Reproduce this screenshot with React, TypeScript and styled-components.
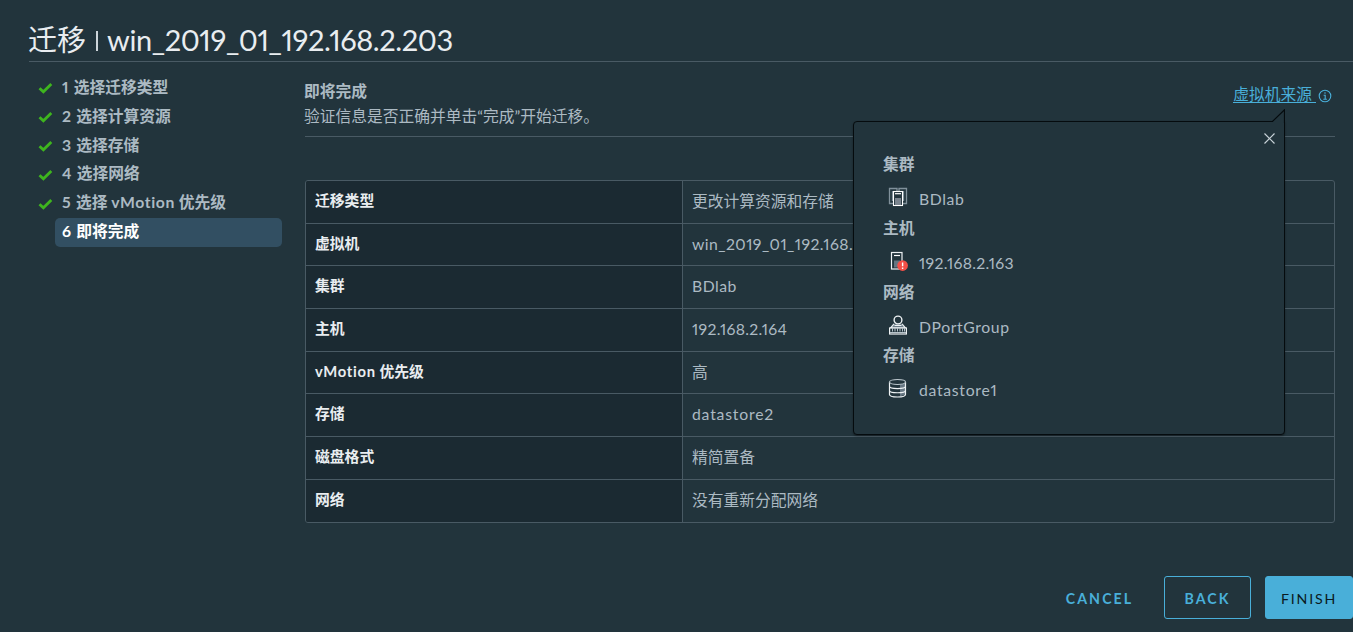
import React from "react";
import styled, { createGlobalStyle } from "styled-components";

const fontStack = `Lato, "Noto Sans CJK SC", sans-serif`;

const GlobalStyle = createGlobalStyle`
  *, *::before, *::after { box-sizing: border-box; }
  body {
    margin: 0;
    background: #22343c;
    color: #acbac3;
    font-family: ${fontStack};
    font-size: 15.75px;
    font-variant-numeric: proportional-nums;
    overflow: hidden;
  }
`;

const Wizard = styled.div`
  display: flex;
  flex-direction: column;
  width: 1353px;
  height: 632px;
  background: #22343c;
`;

const Header = styled.header`
  height: 62px;
  margin-left: 29px;
  padding-top: 21px;
  border-bottom: 1px solid #495a64;
`;

const Title = styled.h1`
  display: flex;
  align-items: baseline;
  margin: 0 0 0 -1px;
  font-size: 29px;
  line-height: 38px;
  font-weight: 400;
  color: #e9edf0;
  white-space: pre;
`;

const TitleBar = styled.i`
  align-self: center;
  width: 1.5px;
  height: 20px;
  margin: 2px 9.5px 0 10px;
  background: #cdd5da;
`;

const Latin = styled.span<{ $track?: number }>`
  letter-spacing: ${(p) => p.$track ?? 0}px;
`;

const Body = styled.div`
  display: flex;
  flex: 1;
  min-height: 0;
`;

const Steps = styled.ol`
  display: flex;
  flex-direction: column;
  width: 305px;
  margin: 0;
  padding: 12px 23px 0 38px;
  list-style: none;
`;

const Step = styled.li`
  display: flex;
  align-items: center;
  height: 28.8px;
`;

const CheckSlot = styled.span`
  display: flex;
  width: 17px;
`;

const StepLabel = styled.span<{ $active?: boolean }>`
  flex: 1;
  height: 28.8px;
  padding-left: 7px;
  border-radius: 5px;
  line-height: 26px;
  font-weight: 700;
  white-space: nowrap;
  color: ${(p) => (p.$active ? "#ffffff" : "#acbac3")};
  background: ${(p) => (p.$active ? "#324f62" : "transparent")};
`;

const Content = styled.main`
  display: flex;
  flex-direction: column;
  width: 1030px;
`;

const PageHead = styled.div`
  display: flex;
  justify-content: space-between;
  height: 75px;
  border-bottom: 1px solid #495a64;
`;

const Intro = styled.div`
  margin-left: -1px;
  padding-top: 16px;
  line-height: 25px;
`;

const IntroTitle = styled.div`
  font-weight: 700;
`;

const SourceAnchor = styled.div`
  position: relative;
  display: flex;
  align-items: flex-start;
  padding: 21px 3px 0 0;
`;

const SourceLink = styled.a`
  color: #49afd9;
  height: 20px;
  line-height: 22px;
  white-space: pre;
  border-bottom: 1px solid #49afd9;
`;

const InfoIcon = styled.svg`
  margin: 6px 0 0 2px;
`;

const Popover = styled.section`
  position: absolute;
  top: 59px;
  right: 50px;
  width: 432px;
  height: 314px;
  padding: 29px 29px 0;
  background: #22343c;
  border: 1px solid #050b0e;
  border-radius: 4px 0 4px 4px;
  box-shadow: 0 1px 2px rgba(0, 0, 0, 0.4);
`;

const Tail = styled.svg`
  position: absolute;
  top: -13px;
  right: -1px;
`;

const Close = styled.svg`
  position: absolute;
  top: 11px;
  right: 9px;
`;

const Group = styled.div`
  height: 63.8px;
`;

const GroupTitle = styled.div`
  height: 28px;
  line-height: 26px;
  font-weight: 700;
`;

const GroupItem = styled.div`
  display: flex;
  height: 36px;
  padding-left: 5px;
`;

const ItemIcon = styled.svg`
  flex: none;
  width: 20px;
  height: 20px;
  margin: 8px 11px 0 0;
`;

const ItemText = styled.span`
  line-height: 39px;
`;

const Table = styled.dl`
  display: flex;
  flex-direction: column;
  height: 343px;
  margin: 43px 0 0;
  border: 1px solid #495a64;
  border-radius: 3px;
  overflow: hidden;
`;

const Row = styled.div`
  display: grid;
  grid-template-columns: 377px 1fr;
  flex: none;
  height: 41.68px;
  & + & {
    height: 42.67px;
  }
  & + & > * {
    border-top: 1px solid #495a64;
  }
  &:last-child {
    flex: 1;
  }
`;

const Name = styled.dt`
  padding-left: 9px;
  background: #1b2a32;
  border-right: 1px solid #495a64;
  color: #e9edf0;
  font-size: 14.8px;
  line-height: 38px;
  font-weight: 700;
`;

const Value = styled.dd`
  margin: 0;
  padding-left: 9px;
  line-height: 39px;
`;

const Footer = styled.footer`
  display: flex;
  justify-content: flex-end;
  height: 56px;
`;

const Button = styled.button<{ $kind: "link" | "outline" | "solid" }>`
  width: ${(p) => (p.$kind === "link" ? 101 : p.$kind === "outline" ? 87 : 88)}px;
  height: 43px;
  margin-left: 14px;
  padding: 1px 0 0;
  border: 1px solid ${(p) => (p.$kind === "link" ? "transparent" : "#49afd9")};
  border-radius: 3px;
  background: ${(p) => (p.$kind === "solid" ? "#49afd9" : "transparent")};
  color: ${(p) => (p.$kind === "solid" ? "#0b1a21" : "#49afd9")};
  font-family: ${fontStack};
  font-size: 14.2px;
  font-weight: ${(p) => (p.$kind === "solid" ? 400 : 700)};
  letter-spacing: ${(p) => (p.$kind === "solid" ? 1.8 : 2.1)}px;
`;

const Check = () => (
  <svg width="15" height="12" viewBox="0 0 15 12">
    <path d="M1.5 6.2 5.4 9.8 13.3 2" fill="none" stroke="#3eb51e" strokeWidth="2.8" />
  </svg>
);

const ClusterIcon = () => (
  <ItemIcon viewBox="0 0 20 20">
    <path d="M5.500 16.500H1.500V1.500H9V4M14.500 16.500H18.500V1.500H11V4M4.500 4v10M15.500 4v10" fill="none" stroke="#81919b" strokeWidth="1.300" />
    <rect x="5.500" y="4.500" width="9" height="14" fill="#22343c" stroke="#fff" strokeWidth="1.100" />
    <path d="M7 6.700h6" stroke="#fff" strokeWidth="1.200" />
    <path d="M7 11h6v7H7z" fill="#7b858f" />
  </ItemIcon>
);

const HostIcon = () => (
  <ItemIcon viewBox="0 0 20 20">
    <rect x="3.500" y="1.500" width="10.500" height="16.500" fill="none" stroke="#eef2f4" strokeWidth="1.200" />
    <path d="M6 4.500h6" stroke="#fff" strokeWidth="1.200" />
    <path d="M6 9.500h6v7H6z" fill="#647581" />
    <circle cx="14.600" cy="14.600" r="5.300" fill="#f54f47" />
    <path d="M14.600 11.500v3.700M14.600 16.400v1.500" stroke="#fff" strokeWidth="1.400" />
  </ItemIcon>
);

const PortGroupIcon = () => (
  <ItemIcon viewBox="0 0 20 20">
    <path d="M6 8.800 2.500 13h15L14 8.800" fill="#697a85" stroke="#e4eaed" strokeWidth="1.200" />
    <circle cx="10" cy="5" r="3.900" fill="#22343c" stroke="#eef2f4" strokeWidth="1.400" />
    <path d="M6.500 10.500h7" stroke="#eef2f4" />
    <rect x="1.600" y="13" width="16.800" height="6" fill="#22343c" stroke="#eef2f4" strokeWidth="1.200" />
    <path d="M4.500 13v3.500M7 13v3.500M9.500 13v3.500M12 13v3.500M14.500 13v3.500M16.500 13v3.500M2 17.500h16" stroke="#b7c3ca" strokeWidth="1" />
  </ItemIcon>
);

const DatastoreIcon = () => (
  <ItemIcon viewBox="0 0 20 20">
    <path d="M12 6.500 17 5v11.500l-5 2z" fill="#687884" />
    <path
      d="M1.500 4v12.500c0 3.300 16 3.300 16 0V4M1.500 8.200c0 3.100 16 3.100 16 0M1.500 12.400c0 3.100 16 3.100 16 0"
      fill="none"
      stroke="#eef2f4"
      strokeWidth="1.200"
    />
    <ellipse cx="9.500" cy="4" rx="8" ry="2.500" fill="#22343c" stroke="#bdc8ce" strokeWidth="1.200" />
  </ItemIcon>
);

const steps: { n: string; label: React.ReactNode }[] = [
  { n: "1", label: "选择迁移类型" },
  { n: "2", label: "选择计算资源" },
  { n: "3", label: "选择存储" },
  { n: "4", label: "选择网络" },
  { n: "5", label: <>选择 <Latin $track={0.6}>vMotion</Latin> 优先级</> },
  { n: "6", label: "即将完成" },
];

const rows: [React.ReactNode, React.ReactNode][] = [
  ["迁移类型", "更改计算资源和存储"],
  ["虚拟机", <Latin $track={0.45}>win_2019_01_192.168.2.203</Latin>],
  ["集群", <Latin $track={0.5}>BDlab</Latin>],
  ["主机", <Latin $track={0.3}>192.168.2.164</Latin>],
  [<><Latin $track={0.7}>vMotion</Latin> 优先级</>, "高"],
  ["存储", <Latin $track={0.8}>datastore2</Latin>],
  ["磁盘格式", "精简置备"],
  ["网络", "没有重新分配网络"],
];

const sources = [
  { title: "集群", Icon: ClusterIcon, text: "BDlab", track: 0.6 },
  { title: "主机", Icon: HostIcon, text: "192.168.2.163", track: 0.3 },
  { title: "网络", Icon: PortGroupIcon, text: "DPortGroup", track: 0.6 },
  { title: "存储", Icon: DatastoreIcon, text: "datastore1", track: 0.7 },
];

export default function App() {
  return (
    <Wizard>
      <GlobalStyle />
      <Header>
        <Title>
          <span>迁移</span>
          <TitleBar />
          <Latin $track={-0.4}>win_2019_01_192.168.2.203</Latin>
        </Title>
      </Header>
      <Body>
        <Steps>
          {steps.map((s, i) => {
            const active = i === steps.length - 1;
            return (
              <Step key={s.n}>
                <CheckSlot>{!active && <Check />}</CheckSlot>
                <StepLabel $active={active}>
                  <Latin $track={0.7}>{s.n} </Latin>
                  {s.label}
                </StepLabel>
              </Step>
            );
          })}
        </Steps>
        <Content>
          <PageHead>
            <Intro>
              <IntroTitle>即将完成</IntroTitle>
              <div>验证信息是否正确并单击“完成”开始迁移。</div>
            </Intro>
            <SourceAnchor>
              <SourceLink>虚拟机来源 </SourceLink>
              <InfoIcon width="14" height="14" viewBox="0 0 14 14">
                <circle cx="7" cy="7" r="5.800" fill="none" stroke="#49afd9" strokeWidth="1.100" />
                <path d="M7 3.300v1.500M5.600 6.300H7.200V10M5.300 10.200h3.600" fill="none" stroke="#49afd9" strokeWidth="1.100" />
              </InfoIcon>
              <Popover>
                <Tail width="14" height="14" viewBox="0 0 14 14">
                  <path d="M0 14V12.500H1.500L13.500.8V14z" fill="#22343c" />
                  <path d="M0 12.500H1.500L13.500.8V14" fill="none" stroke="#050b0e" strokeWidth="1.200" />
                </Tail>
                <Close width="11" height="11" viewBox="0 0 11 11">
                  <path d="M.5.5l10 10M10.500.5l-10 10" stroke="#c8d2d8" strokeWidth="1.200" />
                </Close>
                {sources.map(({ title, Icon, text, track }) => (
                  <Group key={title}>
                    <GroupTitle>{title}</GroupTitle>
                    <GroupItem>
                      <Icon />
                      <ItemText>
                        <Latin $track={track}>{text}</Latin>
                      </ItemText>
                    </GroupItem>
                  </Group>
                ))}
              </Popover>
            </SourceAnchor>
          </PageHead>
          <Table>
            {rows.map(([name, value], i) => (
              <Row key={i}>
                <Name>{name}</Name>
                <Value>{value}</Value>
              </Row>
            ))}
          </Table>
        </Content>
      </Body>
      <Footer>
        <Button $kind="link">CANCEL</Button>
        <Button $kind="outline">BACK</Button>
        <Button $kind="solid">FINISH</Button>
      </Footer>
    </Wizard>
  );
}
